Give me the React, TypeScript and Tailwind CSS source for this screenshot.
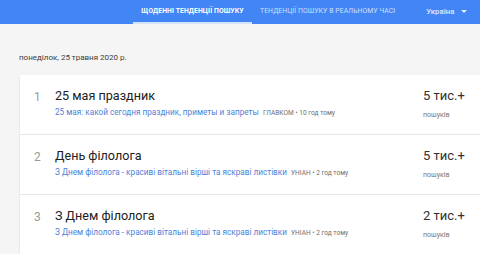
const rows = [
  {
    n: 1,
    title: "25 мая праздник",
    link: "25 мая: какой сегодня праздник, приметы и запреты",
    source: "ГЛАВКОМ • 10 год тому",
    count: "5 тис.+",
  },
  {
    n: 2,
    title: "День філолога",
    link: "З Днем філолога - красиві вітальні вірші та яскраві листівки",
    source: "УНІАН • 2 год тому",
    count: "5 тис.+",
  },
  {
    n: 3,
    title: "З Днем філолога",
    link: "З Днем філолога - красиві вітальні вірші та яскраві листівки",
    source: "УНІАН • 2 год тому",
    count: "2 тис.+",
  },
];

const Header = () => (
  <div className="flex h-[24px] items-stretch bg-[#4285f4] text-[6.8px] tracking-[0.1px]">
    <div className="ml-[133px] flex w-[119px] items-center justify-center border-b-2 border-[#d6e4fb] pt-[1px] font-bold text-white">
      ЩОДЕННІ ТЕНДЕНЦІЇ ПОШУКУ
    </div>
    <div className="ml-[8px] flex items-center pb-[1px] text-[#cfe0fc]">
      ТЕНДЕНЦІЇ ПОШУКУ В РЕАЛЬНОМУ ЧАСІ
    </div>
    <div className="ml-[31px] flex items-center gap-[7px] pb-[1px] text-[7.6px] font-medium text-[#e3edfd]">
      Україна
      <span className="h-0 w-0 border-x-[3px] border-t-[3px] border-x-transparent border-t-[#e3edfd]" />
    </div>
  </div>
);

const Row = ({ r, last }: { r: (typeof rows)[number]; last: boolean }) => (
  <div className={`flex h-[60px] ${last ? "" : "border-b border-[#e6e6e6]"}`}>
    <div className="w-[35px] pt-[13px] pl-[14px] text-[12px] text-[#9a9a9a]">{r.n}</div>
    <div className="flex-1 pt-[12px]">
      <div className="text-[12.6px] leading-[18px] text-[#212121]">{r.title}</div>
      <div className="mt-[1px] flex items-baseline gap-[4px] leading-[12px]">
        <span className="text-[8.2px] text-[#4f7fd6]">{r.link}</span>
        <span className="text-[6.6px] text-[#707070]">{r.source}</span>
      </div>
    </div>
    <div className="w-[57px] pt-[12px]">
      <div className="text-[13px] leading-[18px] text-[#333]">{r.count}</div>
      <div className="mt-[4px] text-[7px] leading-[12px] text-[#777]">пошуків</div>
    </div>
  </div>
);

export default function App() {
  return (
    <div
      className="h-[254px] w-[480px] overflow-hidden bg-[#f5f5f5]"
      style={{ fontFamily: "Roboto, 'Noto Sans', sans-serif" }}
    >
      <Header />
      <div className="pt-[29px] pl-[19px] text-[8px] leading-[10px] text-[#3c3c3c]">
        понеділок, 25 травня 2020 р.
      </div>
      <div className="ml-[20px] mt-[12px] bg-white shadow-[0_1px_2px_rgba(0,0,0,0.12)]">
        {rows.map((r, i) => (
          <Row key={r.n} r={r} last={i === rows.length - 1} />
        ))}
      </div>
    </div>
  );
}
